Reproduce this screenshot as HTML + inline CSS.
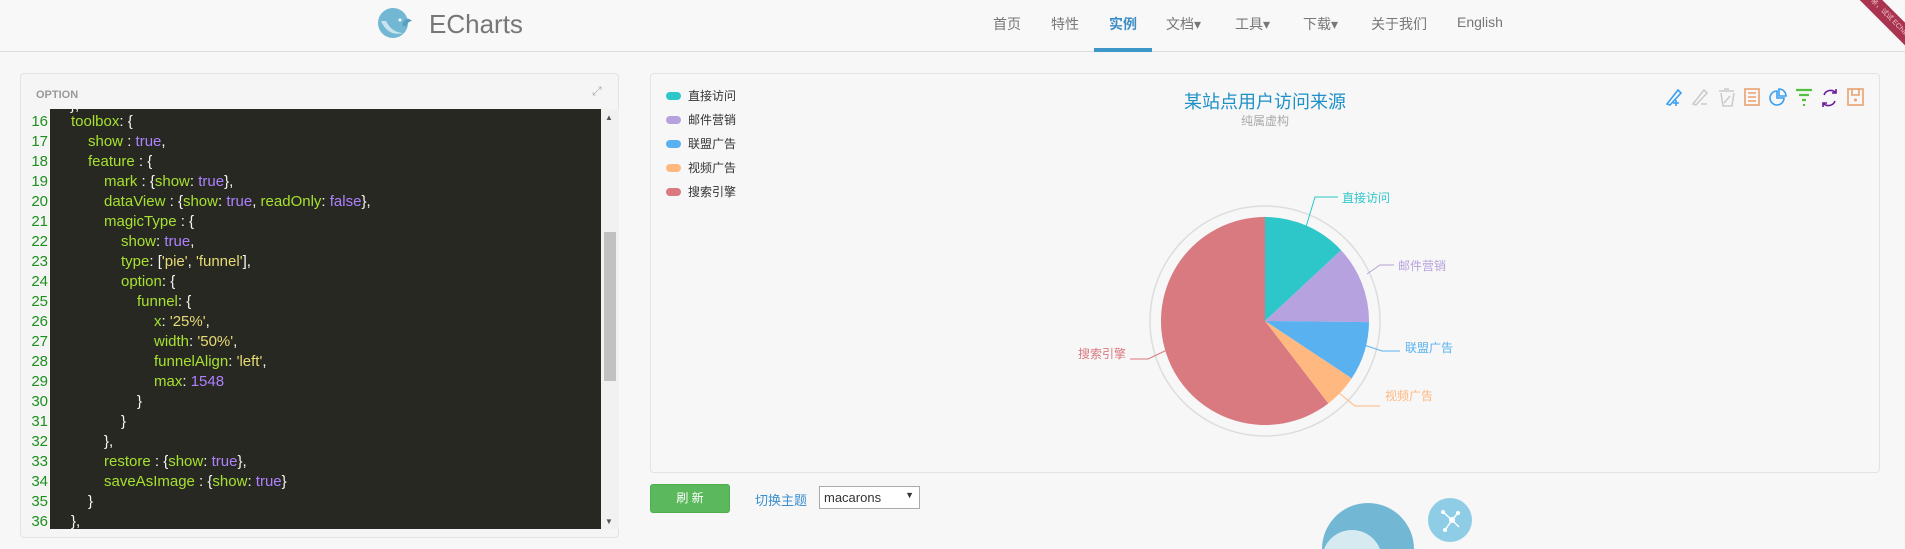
<!DOCTYPE html>
<html><head><meta charset="utf-8"><style>
*{margin:0;padding:0;box-sizing:border-box}
html,body{width:1905px;height:549px;overflow:hidden}
body{background:#f7f7f7;font-family:"Liberation Sans","Noto Sans CJK SC",sans-serif;position:relative}
.hdr{position:absolute;left:0;top:0;width:1905px;height:52px;border-bottom:1px solid #ddd;background:#f8f8f8}
.nav{position:absolute;top:14px;font-size:14px;color:#777}
.code{position:absolute;left:50px;top:109px;width:551px;height:420px;background:#272822;overflow:hidden}
.ln{position:absolute;left:20px;width:28px;text-align:right;color:#1d8f1d;font-size:15px}
.cl{position:absolute;font-size:15px;color:#a6e22e;white-space:pre;font-family:"Liberation Sans","Noto Sans CJK SC",sans-serif}
.p{color:#ae81ff}.w{color:#f8f8f2}.s{color:#e6db74}
</style></head><body>
<div class="hdr"></div>
<svg style="position:absolute;left:378px;top:7px" width="36" height="32" viewBox="0 0 36 32"><circle cx="15" cy="16" r="15" fill="#72b8d4"/><path d="M3 14 Q10 30 26 26 Q14 26 8 14Z" fill="#c9e4ef"/><path d="M24 18 Q28 8 34 14 Q30 14 28 20Z" fill="#5a9fc0"/><circle cx="22" cy="13" r="1.5" fill="#fff"/></svg>
<div style="position:absolute;left:429px;top:9px;font-size:26px;color:#777">ECharts</div>
<div class="nav" style="left:993px">首页</div>
<div class="nav" style="left:1051px">特性</div>
<div class="nav" style="left:1109px;color:#3c8dc5;font-weight:bold">实例</div>
<div style="position:absolute;left:1094px;top:48px;width:58px;height:4px;background:#3c96c8"></div>
<div class="nav" style="left:1166px">文档▾</div>
<div class="nav" style="left:1235px">工具▾</div>
<div class="nav" style="left:1303px">下载▾</div>
<div class="nav" style="left:1371px">关于我们</div>
<div class="nav" style="left:1457px">English</div>
<div style="position:absolute;left:1835px;top:16px;width:120px;height:16px;background:#a83450;transform:rotate(45deg);color:#f0c0c8;font-size:7px;text-align:center;line-height:16px">亲，试试 ECharts 3.0</div>

<div style="position:absolute;left:20px;top:73px;width:599px;height:465px;border:1px solid #e3e3e3;border-radius:4px;background:#f5f5f5"></div>
<div style="position:absolute;left:36px;top:89px;font-size:11px;font-weight:bold;color:#999">OPTION</div>
<div style="position:absolute;left:592px;top:84px;color:#aaa;font-size:12px">⤢</div>
<div class="code">
<div class="cl w" style="left:20px;top:-12px">},</div>
</div>
<div style="position:absolute;left:601px;top:109px;width:18px;height:420px;background:#f1f1f1"></div>
<div style="position:absolute;left:604px;top:232px;width:12px;height:149px;background:#c1c1c1"></div>
<div style="position:absolute;left:605px;top:113px;font-size:8px;color:#555">▲</div>
<div style="position:absolute;left:605px;top:517px;font-size:8px;color:#555">▼</div>
<div class="ln" style="top:113px">16</div><div class="cl" style="left:71px;top:113px">toolbox<span class="w">: {</span></div>
<div class="ln" style="top:133px">17</div><div class="cl" style="left:88px;top:133px">show <span class="w">:</span> <span class="p">true</span><span class="w">,</span></div>
<div class="ln" style="top:153px">18</div><div class="cl" style="left:88px;top:153px">feature <span class="w">: {</span></div>
<div class="ln" style="top:173px">19</div><div class="cl" style="left:104px;top:173px">mark <span class="w">: {</span>show<span class="w">:</span> <span class="p">true</span><span class="w">},</span></div>
<div class="ln" style="top:193px">20</div><div class="cl" style="left:104px;top:193px">dataView <span class="w">: {</span>show<span class="w">:</span> <span class="p">true</span><span class="w">,</span> readOnly<span class="w">:</span> <span class="p">false</span><span class="w">},</span></div>
<div class="ln" style="top:213px">21</div><div class="cl" style="left:104px;top:213px">magicType <span class="w">: {</span></div>
<div class="ln" style="top:233px">22</div><div class="cl" style="left:121px;top:233px">show<span class="w">:</span> <span class="p">true</span><span class="w">,</span></div>
<div class="ln" style="top:253px">23</div><div class="cl" style="left:121px;top:253px">type<span class="w">: [</span><span class="s">'pie'</span><span class="w">, </span><span class="s">'funnel'</span><span class="w">],</span></div>
<div class="ln" style="top:273px">24</div><div class="cl" style="left:121px;top:273px">option<span class="w">: {</span></div>
<div class="ln" style="top:293px">25</div><div class="cl" style="left:137px;top:293px">funnel<span class="w">: {</span></div>
<div class="ln" style="top:313px">26</div><div class="cl" style="left:154px;top:313px">x<span class="w">:</span> <span class="s">'25%'</span><span class="w">,</span></div>
<div class="ln" style="top:333px">27</div><div class="cl" style="left:154px;top:333px">width<span class="w">:</span> <span class="s">'50%'</span><span class="w">,</span></div>
<div class="ln" style="top:353px">28</div><div class="cl" style="left:154px;top:353px">funnelAlign<span class="w">:</span> <span class="s">'left'</span><span class="w">,</span></div>
<div class="ln" style="top:373px">29</div><div class="cl" style="left:154px;top:373px">max<span class="w">:</span> <span class="p">1548</span></div>
<div class="ln" style="top:393px">30</div><div class="cl w" style="left:137px;top:393px">}</div>
<div class="ln" style="top:413px">31</div><div class="cl w" style="left:121px;top:413px">}</div>
<div class="ln" style="top:433px">32</div><div class="cl w" style="left:104px;top:433px">},</div>
<div class="ln" style="top:453px">33</div><div class="cl" style="left:104px;top:453px">restore <span class="w">: {</span>show<span class="w">:</span> <span class="p">true</span><span class="w">},</span></div>
<div class="ln" style="top:473px">34</div><div class="cl" style="left:104px;top:473px">saveAsImage <span class="w">: {</span>show<span class="w">:</span> <span class="p">true</span><span class="w">}</span></div>
<div class="ln" style="top:493px">35</div><div class="cl w" style="left:88px;top:493px">}</div>
<div class="ln" style="top:513px;height:16px;overflow:hidden">36</div><div class="cl w" style="left:71px;top:513px;height:16px;overflow:hidden">},</div>

<div style="position:absolute;left:650px;top:73px;width:1230px;height:400px;border:1px solid #e3e3e3;border-radius:4px;background:#f7f7f7"></div>
<svg style="position:absolute;left:0;top:0" width="1905" height="549" font-family="Liberation Sans,Noto Sans CJK SC,sans-serif">
<text x="1265" y="108" text-anchor="middle" font-size="18" fill="#1e90c8">某站点用户访问来源</text>
<text x="1265" y="125" text-anchor="middle" font-size="12" fill="#aaa">纯属虚构</text>
<g font-size="12" fill="#333">
<rect x="666" y="92" width="15" height="8" rx="4" fill="#2ec7c9"/><text x="688" y="100">直接访问</text>
<rect x="666" y="116" width="15" height="8" rx="4" fill="#b6a2de"/><text x="688" y="124">邮件营销</text>
<rect x="666" y="140" width="15" height="8" rx="4" fill="#5ab1ef"/><text x="688" y="148">联盟广告</text>
<rect x="666" y="164" width="15" height="8" rx="4" fill="#ffb980"/><text x="688" y="172">视频广告</text>
<rect x="666" y="188" width="15" height="8" rx="4" fill="#d87a80"/><text x="688" y="196">搜索引擎</text>
</g>
<circle cx="1265" cy="321" r="115" fill="none" stroke="#ddd" stroke-width="1.5"/>
<path d="M1265 321 L1265 217 A104 104 0 0 1 1341.1 250.2Z" fill="#2ec7c9"/>
<path d="M1265 321 L1341.1 250.2 A104 104 0 0 1 1369 322.1Z" fill="#b6a2de"/>
<path d="M1265 321 L1369 322.1 A104 104 0 0 1 1351.7 378.4Z" fill="#5ab1ef"/>
<path d="M1265 321 L1351.7 378.4 A104 104 0 0 1 1328.3 403.5Z" fill="#ffb980"/>
<path d="M1265 321 L1328.3 403.5 A104 104 0 1 1 1265 217Z" fill="#d87a80"/>
<g fill="none" stroke-width="1">
<path d="M1306 227 L1315 197 H1338" stroke="#2ec7c9"/>
<path d="M1367 274 L1380 265 H1394" stroke="#b6a2de"/>
<path d="M1364 345 L1382 351 H1400" stroke="#5ab1ef"/>
<path d="M1339 393 L1355 406 H1380" stroke="#ffb980"/>
<path d="M1167 350 L1148 359 H1130" stroke="#d87a80"/>
</g>
<g font-size="12">
<text x="1342" y="202" fill="#2ec7c9">直接访问</text>
<text x="1398" y="270" fill="#b6a2de">邮件营销</text>
<text x="1405" y="352" fill="#5ab1ef">联盟广告</text>
<text x="1385" y="400" fill="#ffb980">视频广告</text>
<text x="1126" y="358" text-anchor="end" fill="#d87a80">搜索引擎</text>
</g>
<g fill="none" stroke-width="1.6">
<path d="M1667 104 L1678 90 L1681 93 L1670 105Z M1676 100 v6 M1673 103 h6" stroke="#3a9ff0"/>
<path d="M1693 104 L1704 90 L1707 93 L1696 105Z M1701 104 h6" stroke="#ccc"/>
<path d="M1719 91 h15 M1724 89 h5 M1721 93 l2 13 h9 l2-13 M1724 103 l6 -7" stroke="#ccc"/>
<rect x="1745" y="89" width="14" height="16" stroke="#e8a070"/><path d="M1748 93 h8 M1748 97 h8 M1748 101 h8" stroke="#e8a070"/>
<path d="M1777 91 A7 7 0 1 0 1784 98 H1777Z M1779 89 A7 7 0 0 1 1786 96 H1779Z" stroke="#3a9ff0"/>
<path d="M1796 90 h16 M1799 95 h10 M1802 100 h4 M1804 104 v2" stroke="#55c040" stroke-width="2.2"/>
<path d="M1824 95 A7 7 0 0 1 1836 93 M1835 101 A7 7 0 0 1 1823 103 M1836 89 v4 h-4 M1823 107 v-4 h4" stroke="#6a1a9a"/>
<rect x="1848" y="89" width="15" height="16" stroke="#e8a070"/><path d="M1852 89 v6 h7 v-6" stroke="#e8a070"/><circle cx="1855.5" cy="100" r="1.5" fill="#e8a070"/>
</g>
<circle cx="1368" cy="549" r="46" fill="#72b8d4"/>
<circle cx="1352" cy="560" r="30" fill="#d6eaf2"/>
<circle cx="1450" cy="520" r="22" fill="#8fcde6"/>
<path d="M1443 512 L1452 520 L1445 530 M1452 520 L1458 513 M1452 520 L1459 527" stroke="#fff" stroke-width="1.5" fill="none"/>
<circle cx="1452" cy="520" r="3" fill="#fff"/><circle cx="1443" cy="512" r="2" fill="#fff"/><circle cx="1445" cy="530" r="2" fill="#fff"/><circle cx="1458" cy="513" r="2" fill="#fff"/>
</svg>
<div style="position:absolute;left:650px;top:484px;width:80px;height:29px;background:#5cb85c;border:1px solid #4cae4c;border-radius:3px;color:#fff;font-size:12px;text-align:center;line-height:27px">刷 新</div>
<div style="position:absolute;left:755px;top:490px;font-size:13px;color:#3a8fd0">切换主题</div>
<div style="position:absolute;left:819px;top:486px;width:101px;height:23px;border:1px solid #aaa;background:#fff;font-size:13px;color:#333;padding:3px 0 0 4px">macarons<span style="position:absolute;right:5px;top:3px;font-size:9px">▼</span></div>
</body></html>
